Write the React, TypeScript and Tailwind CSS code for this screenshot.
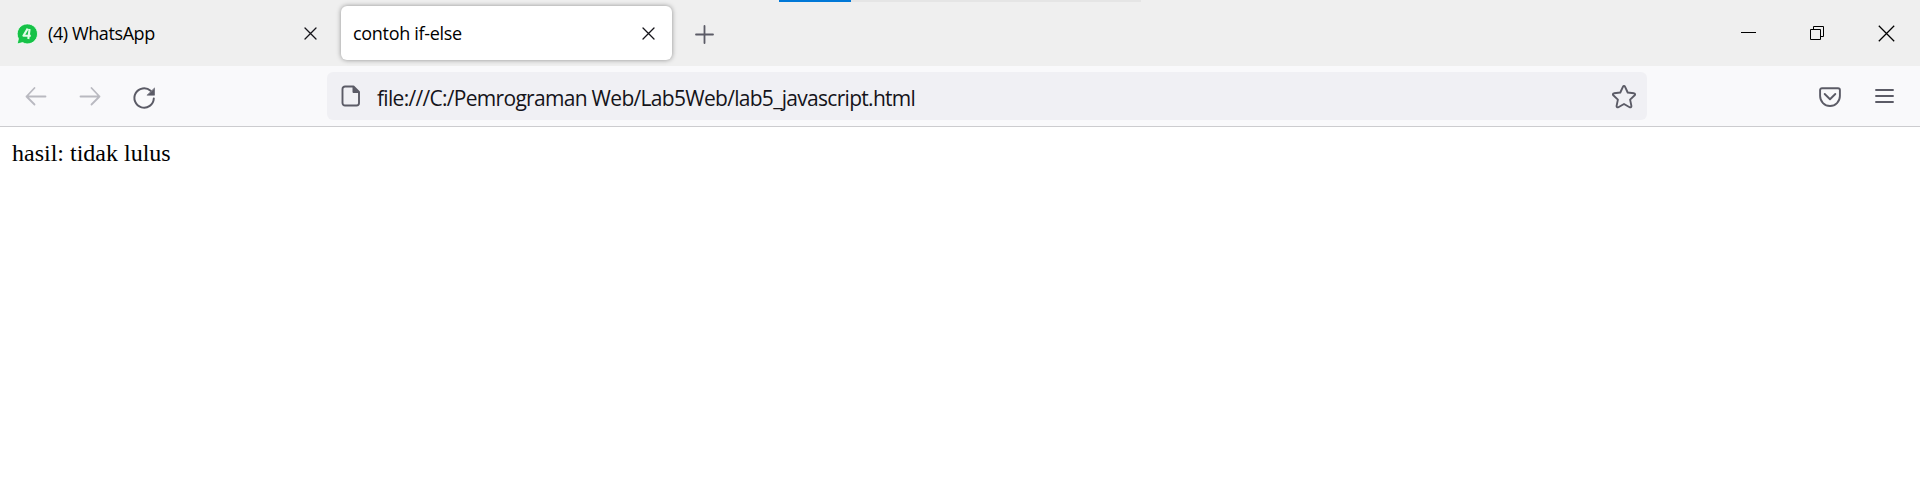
import type { ReactNode } from "react";

type IconProps = { className: string; box: string; children: ReactNode };

function Icon({ className, box, children }: IconProps) {
  return (
    <svg
      viewBox={box}
      className={`block shrink-0 ${className}`}
      fill="none"
      stroke="currentColor"
      strokeLinecap="round"
      strokeLinejoin="round"
      aria-hidden="true"
    >
      {children}
    </svg>
  );
}

function TabClose() {
  return (
    <Icon box="0 0 13 13" className="h-[13px] w-[13px] text-[#15141a]">
      <path d="M1 1l11 11M12 1L1 12" strokeWidth="1.3" />
    </Icon>
  );
}

function TabStrip() {
  return (
    <div className="flex h-[66px] items-start bg-[#efefef]">
      <div className="flex h-[67px] w-[341px] items-center pl-4 pr-[24px]">
        <svg viewBox="0 0 22 22" className="block h-[22px] w-[22px] shrink-0" aria-hidden="true">
          <path
            d="M11.2 .9a10 10 0 1 1-4.6 18.7L1.200 21l1.200-5.300A10 10 0 0 1 11.200 .9z"
            fill="#16c247"
            stroke="#f4fff6"
            strokeWidth=".8"
          />
          <path
            d="M11.700 5.600L7.400 12.700h7.400M13.600 6l-1.300 10"
            fill="none"
            stroke="#e2fbe6"
            strokeWidth="2.100"
            strokeLinejoin="round"
          />
        </svg>
        <span className="ml-[10px] flex-1 whitespace-nowrap text-[18px] tracking-[-0.4px] text-black">(4) WhatsApp</span>
        <TabClose />
      </div>
      <div className="mt-[6px] flex h-[54px] w-[331px] items-center rounded-[6px] bg-white pl-3 pr-[17px] shadow-[0_0_5px_rgba(0,0,0,0.4)]">
        <span className="flex-1 whitespace-nowrap text-[18px] tracking-[-0.32px] text-black">contoh if-else</span>
        <TabClose />
      </div>
      <div className="ml-[23px] flex h-[68px] items-center">
        <Icon box="0 0 19 19" className="h-[19px] w-[19px] text-[#5b5b66]">
          <path d="M9.5 1v17M1 9.5h17" strokeWidth="1.8" />
        </Icon>
      </div>
      <div className="ml-[65px] flex h-[2px] w-[362px] bg-[#e5e5e5]">
        <div className="w-[72px] bg-[#0078d7]" />
      </div>
      <div className="ml-auto flex h-[66px] items-center pr-[25px] text-black">
        <Icon box="0 0 15 15" className="h-[15px] w-[15px]">
          <path d="M0 6.500h15" strokeWidth="1" strokeLinecap="butt" />
        </Icon>
        <Icon box="0 0 14 14" className="ml-[54px] h-[14px] w-[14px]">
          <path
            d="M.5 3.5h10v10H.5zM3.5 3.5v-3h10v10h-3"
            strokeWidth="1"
            strokeLinejoin="miter"
            strokeLinecap="butt"
          />
        </Icon>
        <Icon box="0 0 17 17" className="ml-[54px] h-[17px] w-[17px]">
          <path d="M.8.8l15.4 15.4M16.2.8L.8 16.2" strokeWidth="1.25" strokeLinecap="butt" />
        </Icon>
      </div>
    </div>
  );
}

function Toolbar() {
  return (
    <div className="flex h-[61px] items-center border-b border-[#cccccf] bg-[#f9f9fb] text-[#5b5b66]">
      <div className="flex w-[327px] items-center pl-[25px]">
        <Icon box="0 0 22 20" className="h-5 w-[22px] text-[#b9b9c0]">
          <path d="M20.5 10.5H1.5M9.5 2l-8 8.5 8 8" strokeWidth="1.8" />
        </Icon>
        <Icon box="0 0 22 20" className="ml-8 h-5 w-[22px] text-[#b9b9c0]">
          <path d="M1.5 10.5h19M12.500 2l8 8.500-8 8" strokeWidth="1.8" />
        </Icon>
        <Icon box="0 0 24 24" className="ml-[31px] mt-[3px] h-6 w-6">
          <path d="M21.800 12.500a9.700 9.700 0 1 1-3.200-7.700" strokeWidth="2" />
          <path d="M22.500 2.300v6.900h-7.200z" fill="currentColor" strokeWidth=".6" />
        </Icon>
      </div>
      <div className="flex h-12 w-[1320px] items-center rounded-[6px] bg-[#f0f0f4] pl-[14px] pr-[10px]">
        <Icon box="0 0 20 22" className="h-[22px] w-5">
          <path d="M4 1.500h8.500l5.500 5.500v11a2.500 2.500 0 0 1-2.500 2.500H4A2.500 2.500 0 0 1 1.500 18V4A2.500 2.500 0 0 1 4 1.500z" strokeWidth="1.900" />
          <path d="M12 2v5.500h5.800z" fill="currentColor" strokeWidth="1" />
        </Icon>
        <span className="ml-[16px] flex-1 whitespace-nowrap pt-[4px] text-[21px] leading-7 tracking-[-0.7px] text-[#15141a]">
          file:///C:/Pemrograman Web/Lab5Web/lab5_javascript.html
        </span>
        <Icon box="0 0 26 26" className="mt-[2px] h-[26px] w-[26px]">
          <path
            d="M11.900 2.800c.5-1 1.700-1 2.200 0l2.600 5.700 6.200.7c1.200.1 1.600 1.300.8 2.100l-4.600 4.300 1.300 6.300c.2 1.100-.8 1.800-1.800 1.300L13 20l-5.600 3.200c-1 .5-2-.2-1.800-1.300l1.300-6.300-4.600-4.300c-.8-.8-.4-2 .8-2.100l6.200-.7z"
            strokeWidth="1.900"
          />
        </Icon>
      </div>
      <div className="ml-auto flex items-center pb-[1px] pr-[26px]">
        <Icon box="0 0 22 20" className="mt-[2px] h-5 w-[22px]">
          <path d="M3 1.200h16a1.900 1.900 0 0 1 1.900 1.900v6a9.900 9.900 0 0 1-19.800 0v-6A1.900 1.900 0 0 1 3 1.200z" strokeWidth="1.900" />
          <path d="M5.700 7l5.300 5.200L16.300 7" strokeWidth="1.900" />
        </Icon>
        <Icon box="0 0 19 16" className="ml-[34px] h-4 w-[19px]">
          <path d="M1 2h17M1 8h17M1 14h17" strokeWidth="1.900" />
        </Icon>
      </div>
    </div>
  );
}

export default function App() {
  return (
    <div className="flex h-[493px] w-full flex-col overflow-hidden bg-white font-['Open_Sans','Noto_Sans',sans-serif] text-[#15141a]">
      <TabStrip />
      <Toolbar />
      <main className="px-3 pt-3 font-['Liberation_Serif',serif] text-[24px] leading-[28px] text-black">
        hasil: tidak lulus
      </main>
    </div>
  );
}
